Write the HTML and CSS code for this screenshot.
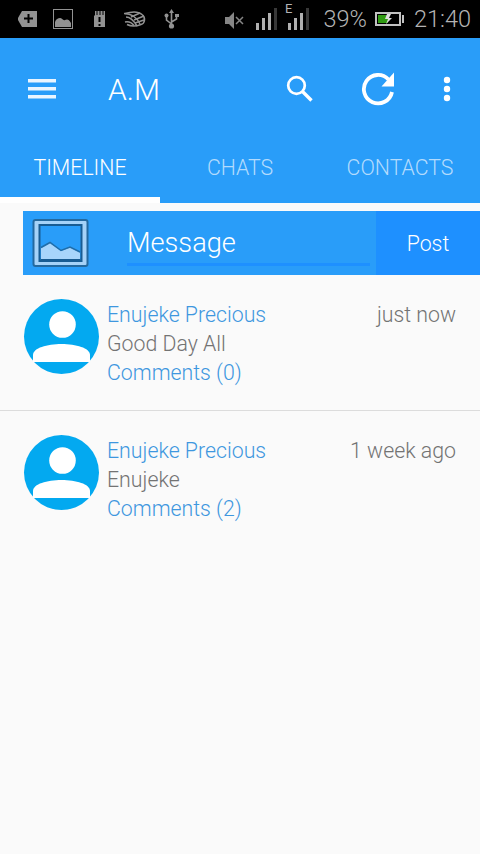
FILE: index.html
```html
<!DOCTYPE html>
<html lang="en">
<head>
    <meta charset="UTF-8">
    <meta name="viewport" content="width=device-width, initial-scale=1.0">
    <title>A.M</title>
    <link rel="stylesheet" href="styles.css">
</head>
<body>

    <!-- Status Bar -->
    <div class="status-bar">
        <svg class="status-icons" width="166" height="38" viewBox="0 0 166 38" fill="#929292">
            <path d="M5 11h15v16H5l-4-7v-2z"/>
            <path d="M11.500 14v9M7 18.500h9" stroke="#000" stroke-width="2"/>
            <rect x="36.500" y="9.500" width="19" height="19" fill="none" stroke="#929292"/>
            <path d="M38 27v-5c1-3 3-4 5-4s3 3 5 2 4-1 6 3v4z"/>
            <path d="M77 16l1-1v-4h10v16H77z"/>
            <path d="M80 11v4M83 11v4M86 11v4" stroke="#000" stroke-width="1"/>
            <path d="M82.500 17v5M82.500 24v2" stroke="#000" stroke-width="2"/>
            <g fill="none" stroke="#929292" stroke-width="1.500">
                <path d="M108 13.500c5-1.500 13-2.500 17 1 4 3 3 9-1 10-5 2-10 2-14 0"/>
                <path d="M107 13.500c8 0 13 4 16 10.500M109 17c5 0 8 4 11 9M108 22c4-1 7 1 9 3.500"/>
                <path d="M117 20l10-4M118 23l9-3M114 17l9-4"/>
            </g>
            <path d="M154.500 12v14M154.500 24l-5-4v-5M154.500 22l5-3v-4" fill="none" stroke="#929292" stroke-width="1.600"/>
            <path d="M152 13l2.500-4 2.500 4zM158 14h4v3h-4z"/>
            <circle cx="149.500" cy="15.500" r="2"/>
            <circle cx="154.500" cy="26" r="2.600"/>
        </svg>
        <div class="status-right">
            <svg width="90" height="38" viewBox="0 0 90 38">
                <path d="M1 17h4l5-5v17l-5-5H1z" fill="#858585"/>
                <path d="M12 17l7 7M19 17l-7 7" stroke="#858585" stroke-width="1.500"/>
                <path d="M32 23h3v7h-3zM38 18h3v12h-3zM44 13h3v17h-3zM64 23h3v7h-3zM70 18h3v12h-3zM76 13h3v17h-3z" fill="#b0b0b0"/>
                <path d="M50 8h3v22h-3zM82 8h3v22h-3z" fill="#383838"/>
                <text class="network" x="61" y="13">E</text>
            </svg>
            <span class="percent">39%</span>
            <svg class="battery" width="30" height="16" viewBox="0 0 30 16">
                <path d="M1 2h24v12H1z" fill="#000" stroke="#c2c2c2" stroke-width="2"/>
                <path d="M3 4h10v8H3z" fill="#2f9a12"/>
                <path d="M27 4h2v8h-2z" fill="#c2c2c2"/>
                <path d="M12 3l-2 5h3l-2 5 6-6h-3l2-4z" fill="#ddd"/>
            </svg>
            <span class="clock">21:40</span>
        </div>
    </div>

    <!-- Header -->
    <div class="header">
        <div class="toolbar">
            <svg class="menu-icon" width="28" height="22" viewBox="0 0 28 22" fill="#fff" fill-opacity="0.900">
                <path d="M0 1h28v3.500H0zM0 9h28v3.500H0zM0 17h28v3.500H0z"/>
            </svg>
            <span class="title">A.M</span>
            <svg class="search-icon" width="28" height="28" viewBox="0 0 28 28" fill="none" stroke="#fff">
                <circle cx="10.500" cy="10.500" r="8.300" stroke-width="2.700"/>
                <path d="M16.500 16.500l9 9" stroke-width="3.400"/>
            </svg>
            <svg class="refresh-icon" width="34" height="34" viewBox="0 0 34 34">
                <path d="M31 20A14.200 14.200 0 1 1 27.500 7.500" fill="none" stroke="#fff" stroke-width="3.800"/>
                <path d="M33 .5V14.500H20.500z" fill="#fff"/>
            </svg>
            <svg width="8" height="28" viewBox="0 0 8 28" fill="#fff">
                <circle cx="4" cy="5" r="3.200"/>
                <circle cx="4" cy="14" r="3.200"/>
                <circle cx="4" cy="23" r="3.200"/>
            </svg>
        </div>
        <div class="tabs">
            <a class="tab active">TIMELINE</a>
            <a class="tab">CHATS</a>
            <a class="tab">CONTACTS</a>
        </div>
    </div>

    <!-- Post Form -->
    <div class="post-form">
        <svg class="picture-icon" width="58" height="50" viewBox="0 0 58 50">
            <rect x="1.500" y="2" width="54" height="46" rx="2" fill="#a5d2f8" stroke="#24699f" stroke-width="2"/>
            <rect x="7.500" y="7" width="42" height="36" fill="#299df9" stroke="#185c93" stroke-width="2"/>
            <path d="M8.500 40.500h40v3h-40z" fill="#185c93"/>
            <path d="M9 41V30l9-5 11 8 9-3.500 10 5V41z" fill="#a8d5fb"/>
            <path d="M9 29.500l9-5 11 8 9-3.500 10 5" fill="none" stroke="#206da9" stroke-width="1.500"/>
        </svg>
        <div class="message">Message</div>
        <div class="post-button">Post</div>
    </div>

    <!-- Timeline -->
    <div class="post">
        <svg class="avatar" width="76" height="76" viewBox="0 0 76 76">
            <circle cx="38.500" cy="37.500" r="37.500" fill="#03a9f0"/>
            <circle cx="39.500" cy="25.500" r="13.300" fill="#fff"/>
            <path d="M10 63V56c0-7 14-11 28.500-11s28.500 4 28.500 11v7z" fill="#fff"/>
        </svg>
        <div class="post-body">
            <div class="author">Enujeke Precious</div>
            <div class="text">Good Day All</div>
            <div class="comments">Comments (0)</div>
        </div>
        <div class="time">just now</div>
    </div>
    <div class="post">
        <svg class="avatar" width="76" height="76" viewBox="0 0 76 76">
            <circle cx="38.500" cy="37.500" r="37.500" fill="#03a9f0"/>
            <circle cx="39.500" cy="25.500" r="13.300" fill="#fff"/>
            <path d="M10 63V56c0-7 14-11 28.500-11s28.500 4 28.500 11v7z" fill="#fff"/>
        </svg>
        <div class="post-body">
            <div class="author">Enujeke Precious</div>
            <div class="text">Enujeke</div>
            <div class="comments">Comments (2)</div>
        </div>
        <div class="time">1 week ago</div>
    </div>

</body>
</html>
```
FILE: styles.css
```css
* {
    box-sizing: border-box;
}
body {
    font-family: Roboto, sans-serif;
    font-weight: 300;
    font-size: 21.3px;
    margin: 0;
    min-height: 854px;
    background-color: #fafafa;
}
svg {
    display: block;
    flex-shrink: 0;
}

/* Status bar */
.status-bar {
    background-color: #000;
    color: #b4b4b4;
    height: 38px;
    padding: 0 9px 0 17px;
    display: flex;
    justify-content: space-between;
    font-size: 23.5px;
    line-height: 42px;
}
.status-right {
    display: flex;
    align-items: center;
}
.network {
    font-size: 13px;
    font-weight: 400;
    fill: #b4b4b4;
}
.percent {
    margin-left: 9px;
}
.battery {
    margin: 0 9px 0 8px;
}

/* Header */
.header {
    background-color: #299df9;
    color: white;
    height: 165px;
}
.toolbar {
    height: 102px;
    padding: 0 29px 0 28px;
    display: flex;
    align-items: center;
}
.title {
    font-size: 30px;
    margin-left: 52px;
    flex: 1;
}
.search-icon {
    margin-right: 47px;
}
.refresh-icon {
    margin-right: 48px;
}
.tabs {
    display: flex;
    height: 63px;
}
.tab {
    flex: 1;
    height: 63px;
    line-height: 56px;
    text-align: center;
    color: #b3dbfd;
    border-bottom: 6px solid transparent;
}
.tab.active {
    color: white;
    border-bottom-color: white;
}

/* Post form */
.post-form {
    background-color: #299df9;
    color: white;
    height: 64px;
    margin: 8px 0 0 23px;
    padding-left: 9px;
    display: flex;
    align-items: center;
}
.message {
    flex: 1;
    height: 45px;
    margin: 0 6px 0 37px;
    line-height: 45px;
    font-size: 27.2px;
    border-bottom: 3px solid #1e90ff;
}
.post-button {
    background-color: #1e90ff;
    width: 104px;
    line-height: 66px;
    height: 64px;
    text-align: center;
}

/* Timeline */
.post {
    display: flex;
    height: 136px;
    padding: 24px 24px 0 23px;
    border-bottom: 1px solid #dcdcdc;
    line-height: 29px;
    color: #737373;
}
.post:last-child {
    border-bottom: none;
}
.post-body {
    flex: 1;
    margin-left: 8px;
    padding-top: 1px;
}
.time {
    padding-top: 1px;
}
.author,
.comments {
    color: #3e97df;
}
```
